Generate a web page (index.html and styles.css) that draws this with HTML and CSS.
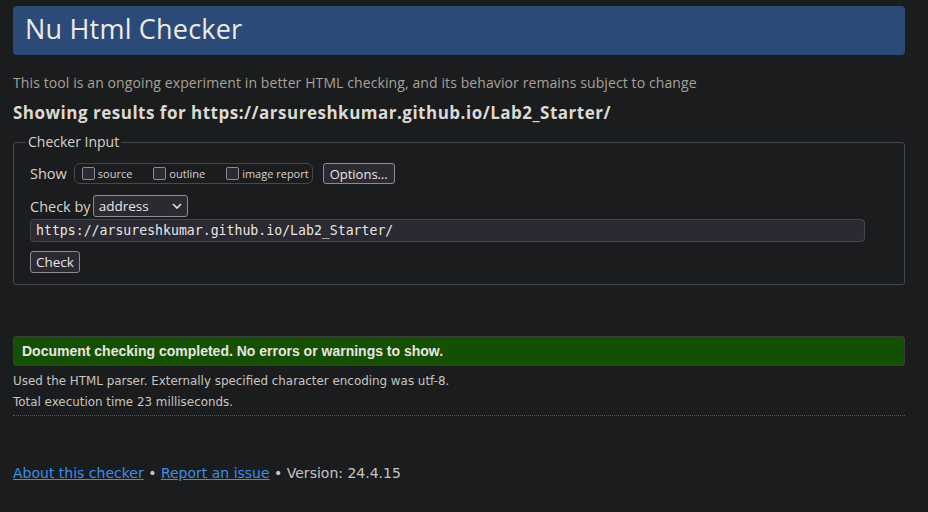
FILE: index.html
```html
<!DOCTYPE html>
<html>
<head>
<meta charset="utf-8">
<title>Nu Html Checker</title>
<link rel="stylesheet" href="styles.css">
</head>
<body>
<h1 class="title">Nu Html Checker</h1>
<p class="intro">This tool is an ongoing experiment in better HTML checking, and its behavior remains subject to change</p>
<p class="showing">Showing results for https://arsureshkumar.github.io/Lab2_Starter/</p>
<fieldset class="input-box">
  <legend class="legend">Checker Input</legend>
  <div class="row show-row">
    <span class="label">Show</span>
    <span class="group">
      <label class="opt"><span class="cb"></span>source</label>
      <label class="opt"><span class="cb"></span>outline</label>
      <label class="opt"><span class="cb"></span>image report</label>
    </span>
    <span class="btn options">Options…</span>
  </div>
  <div class="row by-row">
    <span class="label">Check by</span>
    <span class="select">address<svg class="chev" width="10" height="6" viewBox="0 0 10 6"><path d="M1 1 L5 5 L9 1" fill="none" stroke="#e8e6e3" stroke-width="1.6"/></svg></span>
  </div>
  <div class="url">https://arsureshkumar.github.io/Lab2_Starter/</div>
  <div class="row"><span class="btn check">Check</span></div>
</fieldset>
<div class="success">Document checking completed. No errors or warnings to show.</div>
<p class="details">Used the HTML parser. Externally specified character encoding was utf-8.</p>
<p class="details">Total execution time 23 milliseconds.</p>
<hr class="rule">
<p class="footer"><a href="#">About this checker</a> • <a href="#">Report an issue</a> • Version: 24.4.15</p>
</body>
</html>
```
FILE: styles.css
```css
html { background: #1b1c1e; }
body {
  margin: 0;
  padding: 6px 23px 0 13px;
  background: #1b1c1e;
  color: #e8e6e3;
  font-family: "Open Sans", "Noto Sans", sans-serif;
}
.title {
  margin: 0;
  height: 49px;
  box-sizing: border-box;
  padding: 7px 12px 0;
  background: #2c4a77;
  border-radius: 4px;
  font-weight: normal;
  font-size: 27px;
  line-height: 32px;
  letter-spacing: 0.2px;
  color: #ecebe8;
}
.intro {
  margin: 18px 0 0;
  font-size: 14px;
  line-height: 19px;
  color: #a8a29a;
  letter-spacing: 0.1px;
}
.showing {
  margin: 10px 0 0;
  font-size: 17px;
  font-weight: bold;
  line-height: 22px;
  letter-spacing: 0.5px;
  color: #dcd9d4;
}
.input-box {
  margin: 9px 0 0;
  border: 1px solid #45484b;
  border-radius: 3px;
  padding: 10px 16px 11px;
}
.legend {
  padding: 0 2px;
  margin-left: -4px;
  font-size: 14px;
  color: #d6d3ce;
  line-height: 18px;
}
.row { display: flex; align-items: center; }
.label { font-size: 14.5px; color: #d6d3ce; }
.show-row { margin-top: 2px; }
.group {
  display: inline-flex;
  align-items: center;
  height: 21px;
  margin-left: 7px;
  border: 1px solid #45484b;
  border-radius: 6px;
  padding: 0 3px 0 7px;
  box-sizing: border-box;
}
.opt {
  display: inline-flex;
  align-items: center;
  font-size: 11px;
  color: #d6d3ce;
  margin-right: 21px;
}
.opt:last-child { margin-right: 0; }
.cb {
  width: 11px;
  height: 11px;
  border: 1px solid #8d8b94;
  border-radius: 2px;
  background: #2b2a33;
  margin-right: 3px;
}
.btn {
  display: inline-flex;
  align-items: center;
  height: 21px;
  box-sizing: border-box;
  padding: 0 5px;
  margin-left: 10px;
  border: 1px solid #8d8b94;
  border-radius: 3px;
  background: #2b2a33;
  font-size: 13px;
  color: #e8e6e3;
}
.options { padding: 0 6px; }
.by-row { margin-top: 11px; }
.select {
  display: inline-flex;
  align-items: center;
  justify-content: space-between;
  width: 95px;
  height: 22px;
  box-sizing: border-box;
  margin-left: 2px;
  padding: 0 5px;
  border: 1px solid #8d8b94;
  border-radius: 3px;
  background: #2b2a33;
  font-size: 13.5px;
  color: #e8e6e3;
}
.url {
  margin-top: 2px;
  width: 835px;
  height: 23px;
  box-sizing: border-box;
  padding: 1px 5px 0;
  border: 1px solid #45484b;
  border-radius: 4px;
  background: #2b2a33;
  font-family: "DejaVu Sans Mono", monospace;
  font-size: 13.2px;
  line-height: 20px;
  color: #e8e6e3;
}
.check { margin-left: 0; margin-top: 9px; height: 22px; padding: 0 5px; font-size: 13.5px; }
.success {
  margin-top: 51px;
  height: 30px;
  box-sizing: border-box;
  padding: 0 8px;
  background: #154f00;
  border: 1px solid #3a3d40;
  border-radius: 3px;
  font-family: "Liberation Sans", Arial, sans-serif;
  font-weight: bold;
  font-size: 14px;
  line-height: 28px;
  color: #e8e6e3;
}
.details {
  margin: 0;
  font-family: "DejaVu Sans", sans-serif;
  font-size: 11.9px;
  line-height: 21px;
  color: #c8c5c0;
}
.success + .details { margin-top: 5px; }
.rule {
  margin: 2px 0 0;
  border: 0;
  border-top: 1px dotted #55585b;
}
.footer {
  margin: 49px 0 0;
  font-family: "DejaVu Sans", sans-serif;
  font-size: 14px;
  color: #c8c5c0;
}
.footer a { color: #3b8eea; }
```
